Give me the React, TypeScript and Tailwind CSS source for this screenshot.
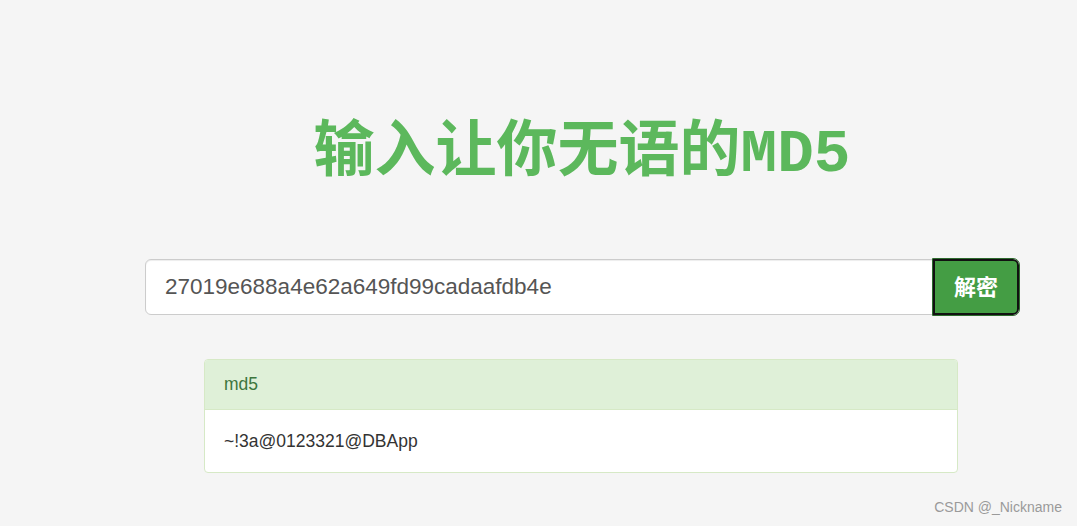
import React from 'react';

export default function App() {
  return (
    <div className="relative min-h-screen w-full bg-[#f5f5f5] pt-[117px] font-['Liberation_Sans',_'Noto_Sans_CJK_SC',_sans-serif]">
      <div className="ml-[145px] flex w-[874px] flex-col items-center">
        {/* Title */}
        <h1 className="font-['Liberation_Mono',_'Noto_Sans_CJK_SC',_monospace] text-[61px] font-bold leading-[76px] text-[#5cb85c]">
          输入让你无语的MD5
        </h1>

        {/* Input group */}
        <div className="mt-[66px] flex h-[56px] w-full">
          <input
            readOnly
            value="27019e688a4e62a649fd99cadaafdb4e"
            className="h-full flex-1 rounded-l-[6px] border border-[#cccccc] bg-white px-[19px] text-[22.5px] text-[#555555] outline-none shadow-[inset_0_1px_1px_rgba(0,0,0,0.075)]"
          />
          <button className="h-full w-[86px] rounded-r-[6px] border-2 border-[#111] bg-[#449d44] text-[22px] font-bold text-white outline outline-1 outline-[#2d6a2d]">
            解密
          </button>
        </div>

        {/* Result panel */}
        <div className="mt-[44px] -ml-[2px] w-[754px] overflow-hidden rounded-[4px] border border-[#d6e9c6] bg-white">
          <div className="flex h-[50px] items-center border-b border-[#d6e9c6] bg-[#dff0d8] px-[19px] text-[17.5px] text-[#3c763d]">
            md5
          </div>
          <div className="flex h-[62px] items-center px-[19px] text-[17.5px] text-[#333333]">
            ~!3a@0123321@DBApp
          </div>
        </div>
      </div>

      {/* Watermark */}
      <div className="absolute bottom-[8px] right-[15px] text-[14px] text-[#9a9a9a]">
        CSDN @_Nickname
      </div>
    </div>
  );
}
